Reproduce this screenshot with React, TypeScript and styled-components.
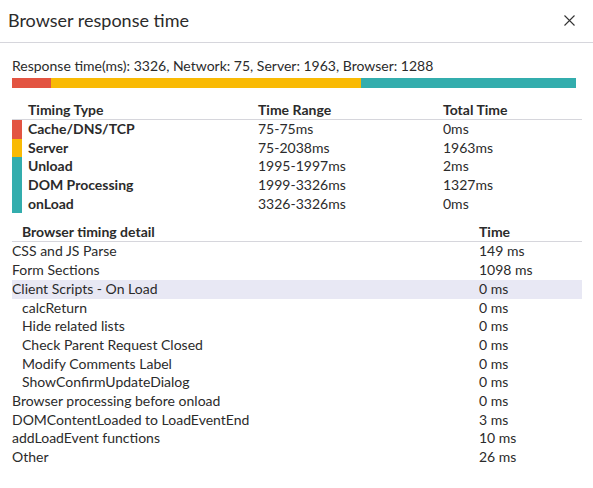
import React from 'react';
import styled, {createGlobalStyle} from "styled-components";

const GlobalStyle = createGlobalStyle`
  body {
    margin: 0;
    background: #fff;
    font-family: Lato, "Liberation Sans", sans-serif;
    color: #2b2b2b;
  }
`

type Timing = { name: string; range: string; total: string; color: string }
type Detail = { name: string; time: string; indent?: boolean; active?: boolean }

const colors = {
    red: '#e35442',
    yellow: '#f9ba04',
    teal: '#33adad',
}

const timings: Timing[] = [
    {name: 'Cache/DNS/TCP', range: '75-75ms', total: '0ms', color: colors.red},
    {name: 'Server', range: '75-2038ms', total: '1963ms', color: colors.yellow},
    {name: 'Unload', range: '1995-1997ms', total: '2ms', color: colors.teal},
    {name: 'DOM Processing', range: '1999-3326ms', total: '1327ms', color: colors.teal},
    {name: 'onLoad', range: '3326-3326ms', total: '0ms', color: colors.teal},
]

const details: Detail[] = [
    {name: 'CSS and JS Parse', time: '149 ms'},
    {name: 'Form Sections', time: '1098 ms'},
    {name: 'Client Scripts - On Load', time: '0 ms', active: true},
    {name: 'calcReturn', time: '0 ms', indent: true},
    {name: 'Hide related lists', time: '0 ms', indent: true},
    {name: 'Check Parent Request Closed', time: '0 ms', indent: true},
    {name: 'Modify Comments Label', time: '0 ms', indent: true},
    {name: 'ShowConfirmUpdateDialog', time: '0 ms', indent: true},
    {name: 'Browser processing before onload', time: '0 ms'},
    {name: 'DOMContentLoaded to LoadEventEnd', time: '3 ms'},
    {name: 'addLoadEvent functions', time: '10 ms'},
    {name: 'Other', time: '26 ms'},
]

const App = () => {
    return (
        <>
            <GlobalStyle/>
            <Dialog>
                <Header>
                    <Title>Browser response time</Title>
                    <CloseButton aria-label="Close">
                        <svg width="11" height="11" viewBox="0 0 11 11">
                            <path d="M0.5 0.5 L10.5 10.5 M10.5 0.5 L0.5 10.5" stroke="#333" strokeWidth="1.1"/>
                        </svg>
                    </CloseButton>
                </Header>
                <Body>
                    <Summary>Response time(ms): 3326, Network: 75, Server: 1963, Browser: 1288</Summary>
                    <Bar>
                        <Segment $color={colors.red} $width={6.9}/>
                        <Segment $color={colors.yellow} $width={55}/>
                        <Segment $color={colors.teal} $width={38.1}/>
                    </Bar>

                    <TimingTable>
                        <TimingHead>
                            <span/>
                            <span>Timing Type</span>
                            <span>Time Range</span>
                            <span>Total Time</span>
                        </TimingHead>
                        {timings.map(t => (
                            <TimingRow key={t.name}>
                                <Marker $color={t.color}/>
                                <TypeName>{t.name}</TypeName>
                                <span>{t.range}</span>
                                <span>{t.total}</span>
                            </TimingRow>
                        ))}
                    </TimingTable>

                    <DetailTable>
                        <DetailHead>
                            <span>Browser timing detail</span>
                            <span>Time</span>
                        </DetailHead>
                        {details.map(d => (
                            <DetailRow key={d.name} $active={d.active}>
                                <DetailName $indent={d.indent}>{d.name}</DetailName>
                                <span>{d.time}</span>
                            </DetailRow>
                        ))}
                    </DetailTable>
                </Body>
            </Dialog>
        </>
    );
};

export default App;

const Dialog = styled.div`
  width: 593px;
  height: 488px;
  background: #fff;
`

const Header = styled.div`
  display: flex;
  align-items: center;
  justify-content: space-between;
  padding: 0 18px 0 8px;
  border-bottom: 1px solid #d6d6dc;
  box-sizing: border-box;
  height: 43px;
`

const Title = styled.h2`
  margin: 0;
  font-size: 18px;
  font-weight: 400;
  color: #2b2b2b;
  padding-bottom: 3px;
`

const CloseButton = styled.button`
  border: none;
  background: none;
  padding: 0;
  display: flex;
  margin-bottom: 2px;
`

const Body = styled.div`
  padding: 14px 11px 0 12px;
  font-size: 14px;
`

const Summary = styled.div`
  line-height: 18px;
`

const Bar = styled.div`
  display: flex;
  height: 10px;
  margin: 3px 6px 0 0;
`

const Segment = styled.div<{ $color: string; $width: number }>`
  background: ${p => p.$color};
  width: ${p => p.$width}%;
`

const TimingTable = styled.div`
  margin-top: 13px;
`

const timingColumns = `
  display: grid;
  grid-template-columns: 10px 236px 185px 1fr;
  & > span:nth-child(2) { padding-left: 6px; }
`

const TimingHead = styled.div`
  ${timingColumns};
  font-weight: 700;
  line-height: 18px;
  border-bottom: 1px solid #d6d6dc;
`

const TimingRow = styled.div`
  ${timingColumns};
  height: 18.7px;
  line-height: 18.7px;
`

const Marker = styled.span<{ $color: string }>`
  background: ${p => p.$color};
`

const TypeName = styled.span`
  font-weight: 700;
`

const DetailTable = styled.div`
  margin-top: 9px;
`

const detailColumns = `
  display: grid;
  grid-template-columns: 467px 1fr;
`

const DetailHead = styled.div`
  ${detailColumns};
  font-weight: 700;
  line-height: 19px;
  border-bottom: 1px solid #d6d6dc;
  & > span:first-child { padding-left: 10px; }
`

const DetailRow = styled.div<{ $active?: boolean }>`
  ${detailColumns};
  height: 18.7px;
  line-height: 18.7px;
  background: ${p => p.$active ? '#e8e8f4' : 'transparent'};
`

const DetailName = styled.span<{ $indent?: boolean }>`
  padding-left: ${p => p.$indent ? 10 : 0}px;
`
